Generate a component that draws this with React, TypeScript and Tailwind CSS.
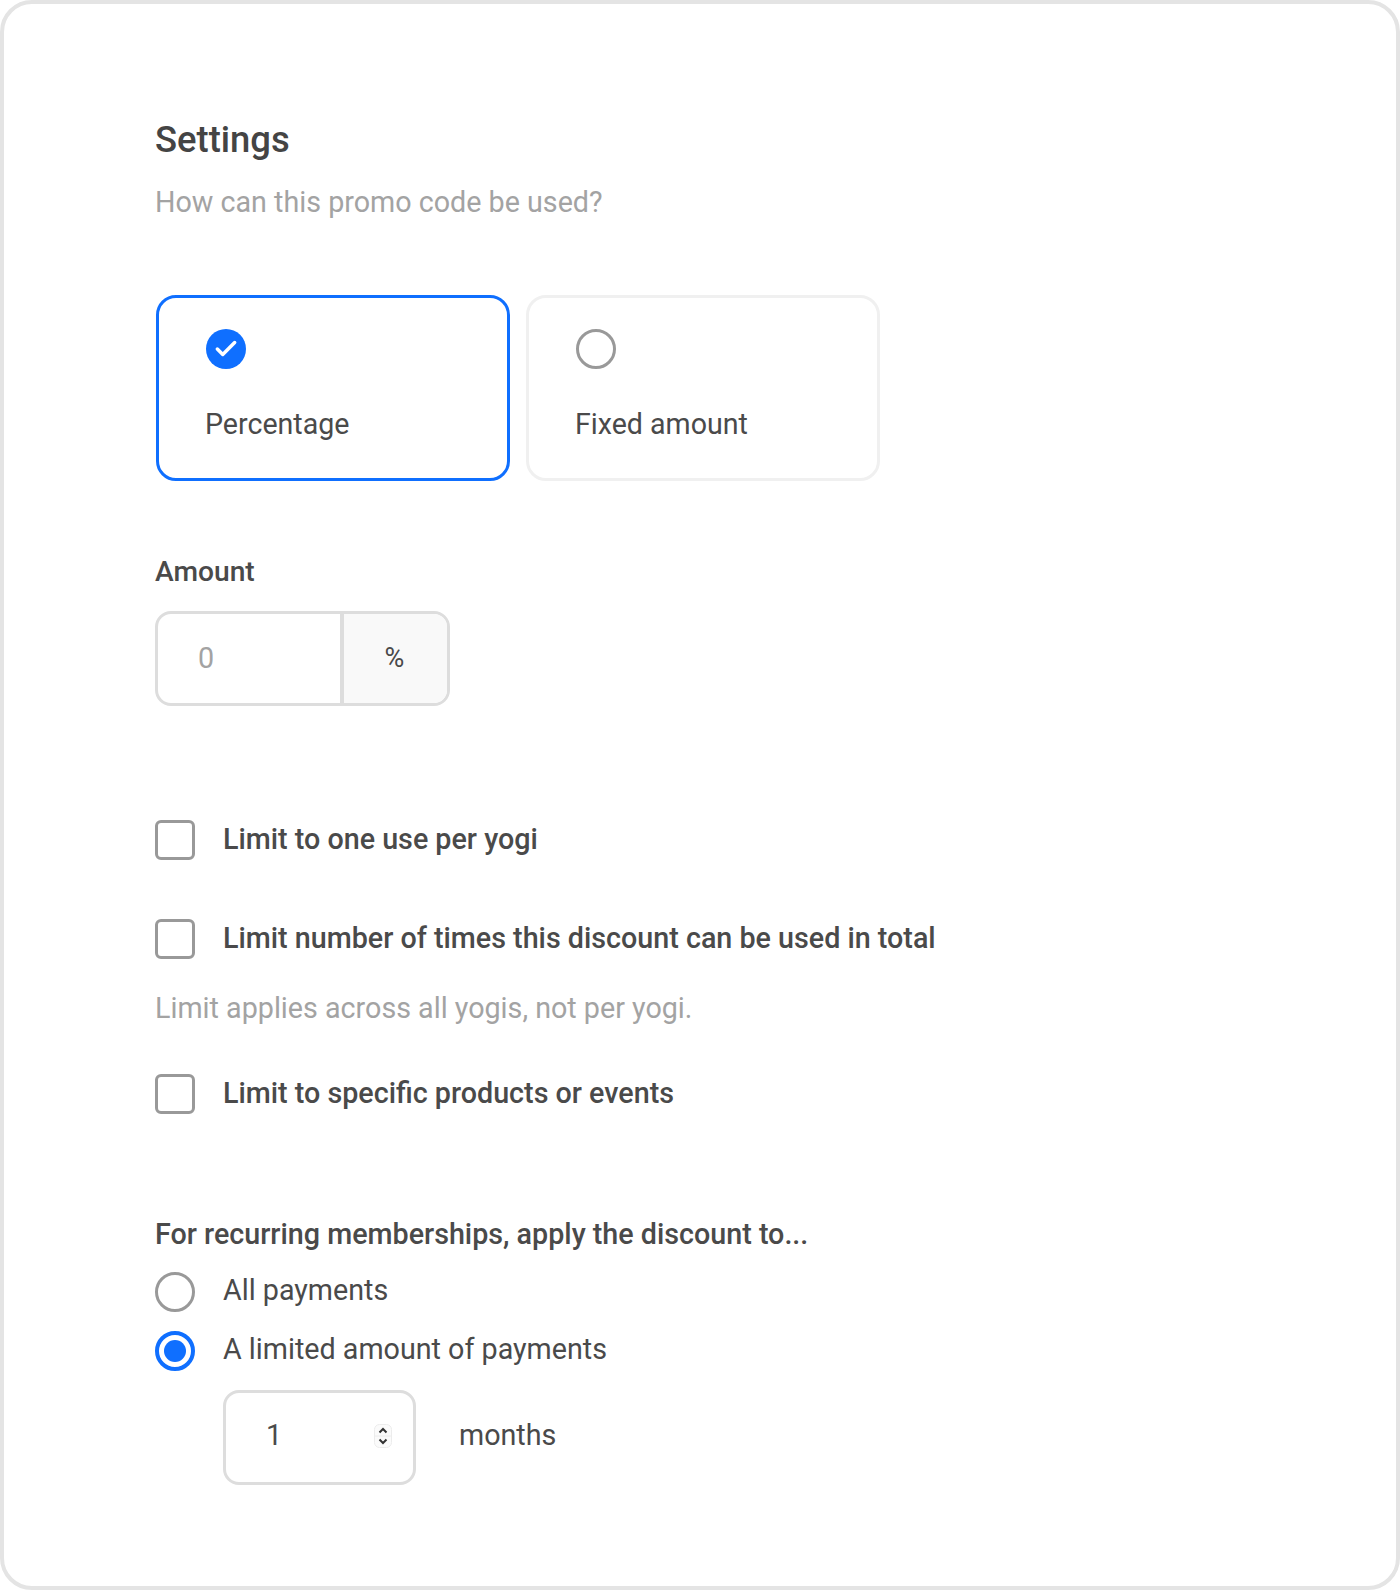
import { Check } from "lucide-react";

const font = { fontFamily: "Roboto, sans-serif" };

const CheckRow = ({ label, className }: { label: string; className?: string }) => (
  <div className={`flex items-center gap-[28px] ${className ?? ""}`}>
    <div className="w-[40px] h-[40px] rounded-[6px] border-[3px] border-[#999999] bg-white" />
    <span className="text-[28.7px] leading-[34px] font-medium text-[#4a4a4a] -mt-[2px]">{label}</span>
  </div>
);

const RadioRow = ({ label, checked, className }: { label: string; checked?: boolean; className?: string }) => (
  <div className={`flex items-center gap-[28px] ${className ?? ""}`}>
    {checked ? (
      <div className="w-[40px] h-[40px] rounded-full border-[4px] border-[#0f6fff] flex items-center justify-center">
        <div className="w-[22px] h-[22px] rounded-full bg-[#0f6fff]" />
      </div>
    ) : (
      <div className="w-[40px] h-[40px] rounded-full border-[3px] border-[#999999]" />
    )}
    <span className="text-[28.7px] leading-[34px] text-[#4a4a4a] -mt-[4px]">{label}</span>
  </div>
);

const OptionCard = ({ label, selected }: { label: string; selected?: boolean }) => (
  <div
    className={`w-[354px] h-[186px] rounded-[20px] bg-white pl-[46px] pt-[31px] ${
      selected ? "border-[3px] border-[#0f6fff]" : "border-[3px] border-[#f0f0f0]"
    }`}
  >
    {selected ? (
      <div className="w-[40px] h-[40px] ml-[1px] rounded-full bg-[#0f6fff] flex items-center justify-center">
        <Check className="w-[26px] h-[26px] text-white" strokeWidth={3.2} />
      </div>
    ) : (
      <div className="w-[40px] h-[40px] ml-[1px] rounded-full border-[3px] border-[#999999]" />
    )}
    <div className="mt-[38px] text-[28.6px] leading-[34px] text-[#4a4a4a]">{label}</div>
  </div>
);

export default function App() {
  return (
    <div style={font} className="w-[1400px] h-[1590px] bg-white">
      <div className="h-full border-[4px] border-[#e4e4e4] rounded-[32px] pl-[151px] pt-[114px]">
        <h1 className="text-[36.4px] leading-[44px] font-medium text-[#444444]">Settings</h1>
        <p className="mt-[23px] text-[28.7px] leading-[34px] text-[#a3a3a3]">How can this promo code be used?</p>

        <div className="mt-[76px] ml-[1px] flex gap-[16px]">
          <OptionCard label="Percentage" selected />
          <OptionCard label="Fixed amount" />
        </div>

        <div className="mt-[74px] text-[28.2px] leading-[34px] font-medium text-[#4a4a4a]">Amount</div>
        <div className="mt-[22px] flex w-[295px] h-[95px] rounded-[16px] border-[3px] border-[#dddddd] overflow-hidden">
          <div className="w-[186px] pl-[40px] flex items-center text-[28.7px] text-[#a3a3a3] border-r-[4px] border-[#dddddd]">0</div>
          <div className="flex-1 bg-[#f9f9f9] flex items-center justify-center pr-[2px] text-[27px] text-[#4a4a4a]">%</div>
        </div>

        <CheckRow label="Limit to one use per yogi" className="mt-[114px]" />
        <CheckRow label="Limit number of times this discount can be used in total" className="mt-[59px]" />
        <p className="mt-[32px] text-[28.7px] leading-[34px] text-[#a3a3a3]">Limit applies across all yogis, not per yogi.</p>
        <CheckRow label="Limit to specific products or events" className="mt-[49px]" />

        <div className="mt-[103px] text-[28.7px] leading-[34px] font-medium text-[#4a4a4a]">
          For recurring memberships, apply the discount to...
        </div>
        <RadioRow label="All payments" className="mt-[21px]" />
        <RadioRow label="A limited amount of payments" checked className="mt-[19px]" />

        <div className="mt-[19px] ml-[68px] flex items-center gap-[43px]">
          <div className="w-[193px] h-[95px] rounded-[16px] border-[3px] border-[#dddddd] flex items-center justify-between pl-[40px] pr-[21px] pb-[4px]">
            <span className="text-[28.7px] text-[#4a4a4a]">1</span>
            <svg width="18" height="24" viewBox="0 0 18 24" fill="none">
              <rect x="0.5" y="0.5" width="17" height="23" rx="5" fill="#fbfbfb" stroke="#ececec" />
              <line x1="1" y1="12" x2="17" y2="12" stroke="#ececec" />
              <path d="M5.5 8.5 L9 5 L12.5 8.5" stroke="#333333" strokeWidth="2" />
              <path d="M5.5 15.5 L9 19 L12.5 15.5" stroke="#333333" strokeWidth="2" />
            </svg>
          </div>
          <span className="text-[28.7px] text-[#4a4a4a] -mt-[4px]">months</span>
        </div>
      </div>
    </div>
  );
}
